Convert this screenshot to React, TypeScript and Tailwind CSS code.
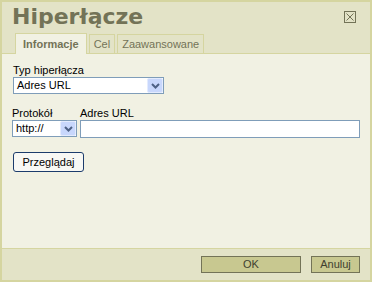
import React from 'react';

const font = { fontFamily: '"Liberation Sans", Arial, sans-serif' };

const Chevron = () => (
    <div className="w-[16px] h-[15px] bg-[#c8d7fc] border border-[#e3ebfe] rounded-[2px] flex items-center justify-center">
        <svg width="9" height="6" viewBox="0 0 9 6">
            <path d="M1 1 L4.5 4.5 L8 1" stroke="#4d6185" strokeWidth="2" fill="none" />
        </svg>
    </div>
);

const FakeSelect: React.FC<{ value: string; width: string }> = ({ value, width }) => (
    <div className={`${width} h-[17px] bg-white border border-[#7f9db9] flex items-center justify-between pl-[3px]`}>
        <span className="text-[11px] text-black leading-none">{value}</span>
        <Chevron />
    </div>
);

const Tab: React.FC<{ label: string; active?: boolean }> = ({ label, active }) => (
    <div
        className={
            active
                ? 'h-[21px] px-[7px] flex items-center bg-[#f1f1e3] border border-b-0 border-[#d5d5a0] text-[11px] font-bold text-[#737357] -mb-px relative z-10'
                : 'h-[19px] px-[4px] flex items-center bg-[#e3e3c7] border border-b-0 border-[#d5d5a0] text-[11px] text-[#737357]'
        }
    >
        {label}
    </div>
);

export default function App() {
    return (
        <div style={font} className="w-[372px] h-[282px] border-2 border-[#d5d5a0] bg-[#e3e3c7] flex flex-col">
            <div className="h-[31px] relative pl-[10px]">
                <div className="text-[22px] font-bold text-[#737357] leading-none pt-[4px]" style={{ fontFamily: '"DejaVu Sans", Verdana, sans-serif' }}>
                    Hiperłącze
                </div>
                <div className="absolute right-[14px] top-[9px] w-[12px] h-[12px] border border-[#737357] flex items-center justify-center">
                    <svg width="8" height="8" viewBox="0 0 8 8">
                        <path d="M0.5 0.5 L7.5 7.5 M7.5 0.5 L0.5 7.5" stroke="#737357" strokeWidth="1" />
                    </svg>
                </div>
            </div>
            <div className="flex items-end gap-[2px] pl-[13px] h-[20px]">
                <Tab label="Informacje" active />
                <Tab label="Cel" />
                <Tab label="Zaawansowane" />
            </div>
            <div className="flex-1 bg-[#f1f1e3] border-t border-[#d5d5a0] pl-[11px] pr-[10px] pt-[10px] text-[11px] text-black">
                <div className="leading-[13px]">Typ hiperłącza</div>
                <FakeSelect value="Adres URL" width="w-[151px]" />
                <div className="flex gap-[3px] mt-[13px]">
                    <div className="flex flex-col -ml-[1px]">
                        <div className="leading-[13px]">Protokół</div>
                        <FakeSelect value="http://" width="w-[65px]" />
                    </div>
                    <div className="flex flex-col flex-1">
                        <div className="leading-[13px]">Adres URL</div>
                        <div className="h-[18px] bg-white border border-[#7f9db9]" />
                    </div>
                </div>
                <button className="mt-[14px] w-[71px] h-[20px] bg-[#f8f8f4] border border-[#1c3c6c] rounded-[3px] text-[11px] text-black flex items-center justify-center">
                    Przeglądaj
                </button>
            </div>
            <div className="h-[32px] border-t border-[#d5d5a0] flex justify-end items-start pt-[7px] pr-[10px] gap-[10px]">
                <button className="w-[100px] h-[17px] bg-[#c8c890] border border-[#737357] text-[11px] text-[#3f3f2f] flex items-center justify-center">
                    OK
                </button>
                <button className="w-[49px] h-[17px] bg-[#c8c890] border border-[#737357] text-[11px] text-[#3f3f2f] flex items-center justify-center">
                    Anuluj
                </button>
            </div>
        </div>
    );
}
